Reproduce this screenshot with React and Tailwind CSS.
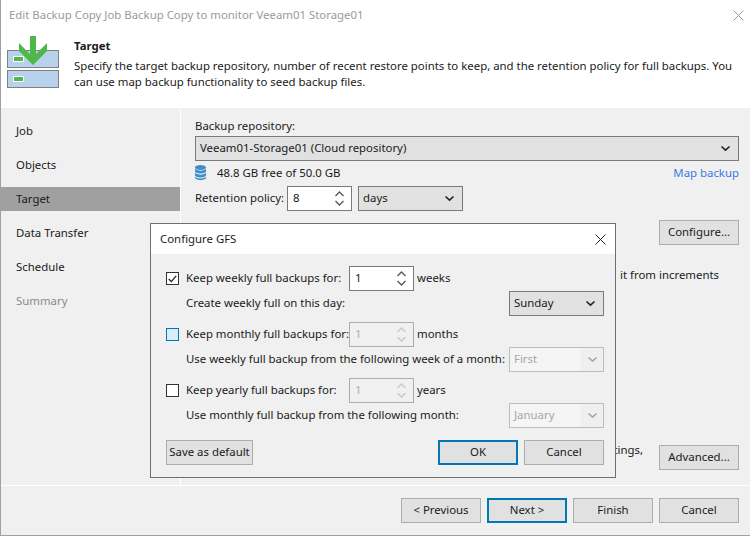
import React from "react";

const Chevron = ({ color = "#222", w = 1.6 }) => (
  <svg width="11" height="7" viewBox="0 0 11 7" fill="none"><path d="M1.5 1.5 L5.5 5.2 L9.5 1.5" stroke={color} strokeWidth={w} /></svg>
);

function Btn({ children, primary, className = "" }) {
  return (
    <div className={`h-[25px] pb-[1px] flex items-center justify-center bg-[#e1e1e1] ${primary ? "border-2 border-[#0078b4]" : "border border-[#adadad]"} ${className}`}>
      {children}
    </div>
  );
}

function Select({ children, className = "", disabled }) {
  if (disabled) {
    return (
      <div className={`h-[25px] flex items-center justify-between bg-[#f5f5f5] border border-[#bcbcbc] text-[#a6a6a6] ${className}`}>
        <span className="pl-[4px] pb-[1px]">{children}</span>
        <span className="w-[22px] h-full bg-[#efefef] flex items-center justify-center"><Chevron color="#a8a8a8" /></span>
      </div>
    );
  }
  return (
    <div className={`h-[25px] flex items-center justify-between bg-[#e1e1e1] border border-[#7a7a7a] pl-[4px] pr-[7px] ${className}`}>
      <span className="pb-[1px]">{children}</span>
      <Chevron />
    </div>
  );
}

function Spinner({ value, disabled, className = "" }) {
  const c = disabled ? "#c8c8c8" : "#555";
  return (
    <div className={`h-[25px] w-[65px] flex items-center justify-between pl-[5px] pr-[6px] border ${disabled ? "border-[#adadad] bg-[#f0f0f0] text-[#adadad]" : "border-[#7a7a7a] bg-white"} ${className}`}>
      <span className="pb-[1px]">{value}</span>
      <svg width="11" height="17" viewBox="0 0 11 17" fill="none">
        <path d="M1.5 6 L5.5 2 L9.5 6" stroke={c} strokeWidth="1.3" />
        <path d="M1.5 11 L5.5 15 L9.5 11" stroke={c} strokeWidth="1.3" />
      </svg>
    </div>
  );
}

function Check({ checked, hover }) {
  return (
    <div className={`w-[13px] h-[13px] shrink-0 flex items-center justify-center border ${hover ? "border-[#0078b4] bg-[#d9ecfa]" : "border-[#333] bg-white"}`}>
      {checked && (
        <svg width="9" height="8" viewBox="0 0 9 8" fill="none"><path d="M0.8 4 L3.3 6.6 L8.2 0.8" stroke="#222" strokeWidth="1.3" /></svg>
      )}
    </div>
  );
}

function GfsBlock({ checked, hover, label, value, unit, disabled, sub, selectValue, className = "" }) {
  return (
    <div className={className}>
      <div className="h-[25px] flex items-center">
        <Check checked={checked} hover={hover} />
        <span className="ml-[7px] w-[163px] pb-[1px] whitespace-nowrap">{label}</span>
        <Spinner value={value} disabled={disabled} />
        <span className="ml-[3px] pb-[1px]">{unit}</span>
      </div>
      <div className="h-[25px] flex items-center justify-between pl-[20px]">
        <span className="whitespace-nowrap pb-[1px]">{sub}</span>
        <Select disabled={disabled} className="w-[95px]">{selectValue}</Select>
      </div>
    </div>
  );
}

function NavItem({ children, active, muted }) {
  return (
    <div className={`h-[24px] flex items-center pl-[15px] ${active ? "bg-[#a0a0a0]" : ""} ${muted ? "text-[#8a8a8a]" : ""}`}>
      {children}
    </div>
  );
}

export default function App() {
  return (
    <div
      className="relative w-[750px] h-[536px] overflow-hidden flex flex-col bg-white border-l border-b border-[#a0a0a0] text-[#1a1a1a] text-[11.4px] leading-[16px]"
      style={{ fontFamily: '"Noto Sans", sans-serif' }}
    >
      {/* Title bar */}
      <div className="h-[30px] shrink-0 flex items-center justify-between pl-[8px] pr-[6px] text-[#9a9a9a]">
        <span>Edit Backup Copy Job Backup Copy to monitor Veeam01 Storage01</span>
        <svg width="11" height="11" viewBox="0 0 11 11" fill="none"><path d="M0.5 0.5 L10.5 10.5 M10.5 0.5 L0.5 10.5" stroke="#9a9a9a" /></svg>
      </div>

      {/* Header */}
      <div className="h-[78px] shrink-0 flex">
        <div className="w-[73px] shrink-0 pl-[6px] pt-[5px]">
          <svg width="54" height="54" viewBox="0 0 54 54">
            <rect x="0.5" y="15.5" width="51" height="17" fill="#b8d2ec" stroke="#808080" />
            <rect x="0.5" y="35.5" width="51" height="17" fill="#b8d2ec" stroke="#808080" />
            <rect x="6.5" y="21.5" width="10" height="5" fill="#50b848" stroke="#fff" />
            <rect x="6.5" y="41.5" width="10" height="5" fill="#50b848" stroke="#fff" />
            <path d="M23 1 H29 V19 L40 8 V16 L26 30 L12 16 V8 L23 19 Z" fill="#50b848" />
          </svg>
        </div>
        <div className="pt-[8px]">
          <div className="font-bold">Target</div>
          <p className="mt-[4px] w-[665px]">Specify the target backup repository, number of recent restore points to keep, and the retention policy for full backups. You can use map backup functionality to seed backup files.</p>
        </div>
      </div>

      {/* Body */}
      <div className="h-[378px] shrink-0 flex bg-[#f0f0f0] border-b border-white">
        <aside className="w-[180px] shrink-0 border-r border-white pt-[11px] flex flex-col gap-[10px]">
          <NavItem>Job</NavItem>
          <NavItem>Objects</NavItem>
          <NavItem active>Target</NavItem>
          <NavItem>Data Transfer</NavItem>
          <NavItem>Schedule</NavItem>
          <NavItem muted>Summary</NavItem>
        </aside>
        <main className="w-[544px] ml-[14px] pt-[10px] pb-[15px] flex flex-col">
          <div className="h-[16px]">Backup repository:</div>
          <Select className="mt-[2px]">Veeam01-Storage01 (Cloud repository)</Select>
          <div className="h-[25px] pb-[1px] flex items-center justify-between">
            <div className="flex items-center">
              <svg width="11" height="16" viewBox="0 0 11 16">
                <ellipse cx="5.5" cy="2.5" rx="5.5" ry="2.5" fill="#3e8fc7" />
                <path d="M0 4 Q5.5 7.5 11 4 V7 Q5.5 10 0 7 Z" fill="#3e8fc7" />
                <path d="M0 8 Q5.5 11.5 11 8 V11 Q5.5 14 0 11 Z" fill="#3e8fc7" />
                <path d="M0 12 Q5.5 15 11 12 V13.5 Q5.5 17 0 13.5 Z" fill="#3e8fc7" />
              </svg>
              <span className="ml-[11px]">48.8 GB free of 50.0 GB</span>
            </div>
            <span className="text-[#3c78e6]">Map backup</span>
          </div>
          <div className="h-[25px] flex items-center">
            <span className="w-[92px] pb-[1px] whitespace-nowrap">Retention policy:</span>
            <Spinner value="8" />
            <Select className="w-[105px] ml-[6px]">days</Select>
          </div>
          <div className="mt-[9px] flex justify-end">
            <Btn className="w-[80px]">Configure...</Btn>
          </div>
          <div className="mt-[22px] pr-[20px] text-right whitespace-nowrap">it from increments</div>
          <div className="mt-auto flex justify-end gap-[16px]">
            <span className="-mt-[3px]">tings,</span>
            <Btn className="w-[80px]">Advanced...</Btn>
          </div>
        </main>
      </div>

      {/* Footer */}
      <div className="flex-1 bg-[#f0f0f0] flex justify-end items-start gap-[6px] pt-[12px] pr-[11px]">
        <Btn className="w-[80px]">&lt; Previous</Btn>
        <Btn primary className="w-[80px]">Next &gt;</Btn>
        <Btn className="w-[80px]">Finish</Btn>
        <Btn className="w-[80px]">Cancel</Btn>
      </div>

      {/* Modal */}
      <div className="absolute left-[149px] top-[223px] w-[466px] h-[255px] border border-[#6e6e6e] bg-[#f0f0f0] flex flex-col">
        <div className="h-[30px] shrink-0 bg-white flex items-center justify-between pl-[9px] pr-[9px]">
          <span>Configure GFS</span>
          <svg width="11" height="11" viewBox="0 0 11 11" fill="none"><path d="M0.5 0.5 L10.5 10.5 M10.5 0.5 L0.5 10.5" stroke="#222" /></svg>
        </div>
        <div className="pl-[15px] pr-[11px] pt-[12px] flex flex-col">
          <GfsBlock checked label="Keep weekly full backups for:" value="1" unit="weeks" sub="Create weekly full on this day:" selectValue="Sunday" />
          <GfsBlock hover disabled className="mt-[6px]" label="Keep monthly full backups for:" value="1" unit="months" sub="Use weekly full backup from the following week of a month:" selectValue="First" />
          <GfsBlock disabled className="mt-[6px]" label="Keep yearly full backups for:" value="1" unit="years" sub="Use monthly full backup from the following month:" selectValue="January" />
          <div className="mt-[12px] flex">
            <Btn className="w-[87px]">Save as default</Btn>
            <Btn primary className="w-[80px] ml-auto">OK</Btn>
            <Btn className="w-[80px] ml-[6px]">Cancel</Btn>
          </div>
        </div>
      </div>
    </div>
  );
}
